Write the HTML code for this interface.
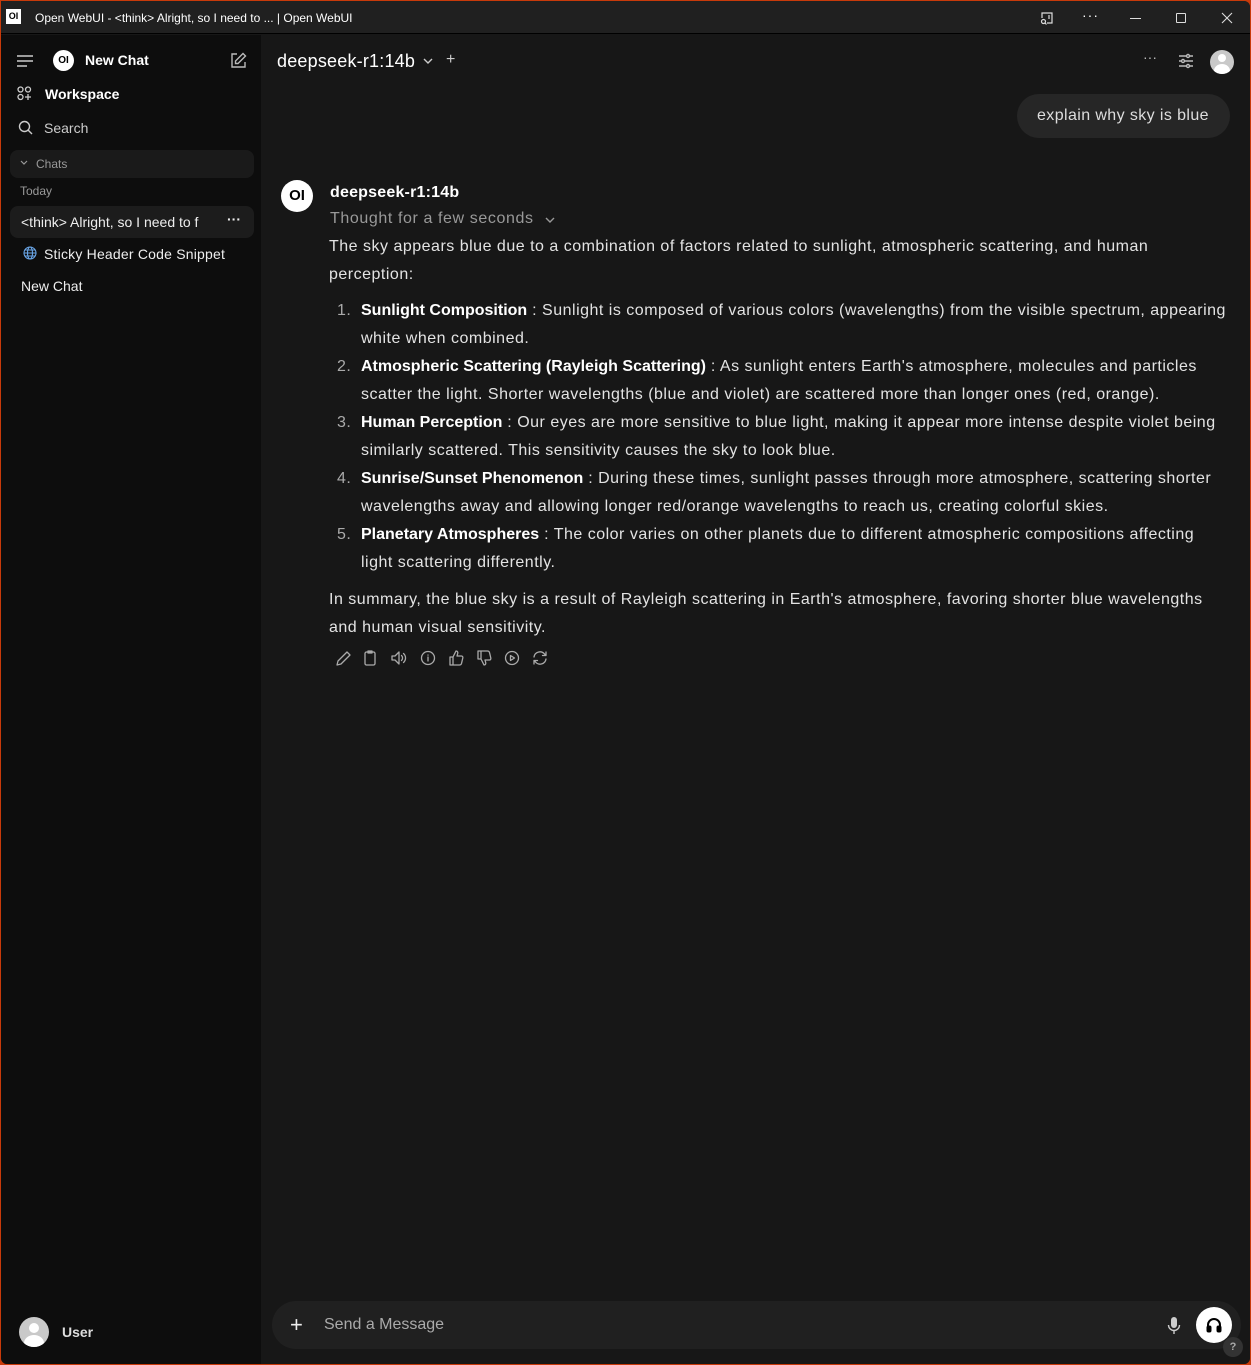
<!DOCTYPE html>
<html><head><meta charset="utf-8">
<style>
*{margin:0;padding:0;box-sizing:border-box}
html,body{width:1251px;height:1365px;overflow:hidden;background:#c83a0a;font-family:"Liberation Sans",sans-serif}
#win{position:absolute;left:1px;top:1px;width:1249px;height:1363px;background:#171717;border-radius:0 6px 6px 6px;overflow:hidden}
#title{position:absolute;left:0;top:0;width:100%;height:33px;background:#202020;border-bottom:1px solid #000;color:#fff;font-size:12px}
#side{position:absolute;left:0;top:34px;width:260px;height:1329px;background:#0d0d0d;color:#e8e8e8;font-size:14px}
.abs{position:absolute;white-space:nowrap}
#main{position:absolute;left:260px;top:34px;width:989px;height:1329px;background:#171717;color:#e3e3e3}
.t{font-size:16px;letter-spacing:0.5px;line-height:28px;color:#e3e3e3}
.t b{color:#fff;letter-spacing:0}
.num{color:#aaa}
svg{display:block}
</style></head><body>
<div id="win">
<div id="title">
 <div class="abs" style="left:5px;top:8px;width:15px;height:15px;background:#fff;color:#000;font-size:9px;font-weight:bold;text-align:center;line-height:15px">OI</div>
 <div class="abs" style="left:34px;top:10px">Open WebUI - &lt;think&gt; Alright, so I need to ... | Open WebUI</div>
 <svg class="abs" style="left:1038px;top:9px" width="16" height="16" viewBox="0 0 16 16" fill="none" stroke="#ddd" stroke-width="1.2"><path d="M3 8V3h10v10H8"/><circle cx="4.5" cy="11.5" r="2"/><path d="M6 13l1.5 1.5"/><path d="M10 5v4"/></svg>
 <div class="abs" style="left:1081px;top:6px;font-size:14px;letter-spacing:1px">···</div>
 <div class="abs" style="left:1129px;top:17px;width:11px;height:1px;background:#ddd"></div>
 <div class="abs" style="left:1175px;top:12px;width:10px;height:10px;border:1px solid #ddd;border-radius:1px"></div>
 <svg class="abs" style="left:1220px;top:11px" width="12" height="12" viewBox="0 0 12 12" stroke="#ddd" stroke-width="1.1"><path d="M1 1l10 10M11 1L1 11"/></svg>
</div>

<div id="side">
 <svg class="abs" style="left:16px;top:20px" width="16" height="12" viewBox="0 0 16 12" stroke="#ccc" stroke-width="1.5"><path d="M0 1h16M0 6h16M0 11h10"/></svg>
 <div class="abs" style="left:52px;top:15px;width:21px;height:21px;border-radius:50%;background:#fff;color:#000;font-size:10px;font-weight:bold;text-align:center;line-height:21px">OI</div>
 <div class="abs" style="left:84px;top:17px;font-weight:bold;color:#fff">New Chat</div>
 <svg class="abs" style="left:228px;top:17px" width="18" height="18" viewBox="0 0 18 18" fill="none" stroke="#bbb" stroke-width="1.4"><path d="M8 2H3v13h13v-5"/><path d="M14 1.5l2.5 2.5L9 11.5H6.5V9z"/></svg>
 <svg class="abs" style="left:16px;top:51px" width="15" height="15" viewBox="0 0 15 15" fill="none" stroke="#ccc" stroke-width="1.3"><circle cx="3.5" cy="3.5" r="2.5"/><circle cx="11" cy="3.5" r="2.5"/><circle cx="3.5" cy="11" r="2.5"/><path d="M11 8v6M8 11h6"/></svg>
 <div class="abs" style="left:44px;top:51px;font-weight:bold;color:#fff">Workspace</div>
 <svg class="abs" style="left:17px;top:85px" width="15" height="15" viewBox="0 0 15 15" fill="none" stroke="#ccc" stroke-width="1.4"><circle cx="6.5" cy="6.5" r="5"/><path d="M10 10l4 4"/></svg>
 <div class="abs" style="left:43px;top:85px;color:#ccc">Search</div>
 <div class="abs" style="left:9px;top:115px;width:244px;height:28px;background:#1a1a1a;border-radius:8px"></div>
 <svg class="abs" style="left:19px;top:125px" width="8" height="6" viewBox="0 0 8 6" fill="none" stroke="#999" stroke-width="1.2"><path d="M1 1l3 3 3-3"/></svg>
 <div class="abs" style="left:35px;top:122px;font-size:12px;color:#999">Chats</div>
 <div class="abs" style="left:19px;top:149px;font-size:12px;color:#999">Today</div>
 <div class="abs" style="left:9px;top:171px;width:244px;height:32px;background:#1c1c1c;border-radius:8px"></div>
 <div class="abs" style="left:20px;top:179px;color:#eee;width:195px;overflow:hidden">&lt;think&gt; Alright, so I need to f</div>
 <div class="abs" style="left:226px;top:176px;color:#eee;font-weight:bold">···</div>
 <svg class="abs" style="left:22px;top:211px" width="14" height="14" viewBox="0 0 14 14" fill="none" stroke="#6aa6e8" stroke-width="1.1"><circle cx="7" cy="7" r="6"/><ellipse cx="7" cy="7" rx="2.5" ry="6"/><path d="M1 7h12M2 4h10M2 10h10"/></svg>
 <div class="abs" style="left:43px;top:211px;color:#eee;letter-spacing:0.2px">Sticky Header Code Snippet</div>
 <div class="abs" style="left:20px;top:243px;color:#eee">New Chat</div>
 <div class="abs" style="left:18px;top:1282px;width:30px;height:30px;border-radius:50%;background:#c9c9c9;overflow:hidden">
  <div style="position:absolute;left:10px;top:6px;width:10px;height:10px;border-radius:50%;background:#fff"></div>
  <div style="position:absolute;left:5px;top:18px;width:20px;height:16px;border-radius:50%;background:#fff"></div>
 </div>
 <div class="abs" style="left:61px;top:1289px;font-weight:bold;color:#ddd">User</div>
</div>

<div id="main">
 <div class="abs" style="left:16px;top:16px;font-size:18px;color:#fff;letter-spacing:0.2px">deepseek-r1:14b</div>
 <svg class="abs" style="left:162px;top:23px" width="10" height="7" viewBox="0 0 10 7" fill="none" stroke="#ccc" stroke-width="1.4"><path d="M1 1l4 4 4-4"/></svg>
 <div class="abs" style="left:185px;top:16px;font-size:16px;color:#ccc">+</div>
 <div class="abs" style="left:882px;top:14px;color:#bbb;font-size:14px">···</div>
 <svg class="abs" style="left:917px;top:18px" width="16" height="16" viewBox="0 0 16 16" stroke="#bbb" stroke-width="1.4" fill="#171717"><path d="M1 3h14M1 8h14M1 13h14"/><circle cx="10" cy="3" r="1.5"/><circle cx="5" cy="8" r="1.5"/><circle cx="10" cy="13" r="1.5"/></svg>
 <div class="abs" style="left:949px;top:15px;width:24px;height:24px;border-radius:50%;background:#c9c9c9;overflow:hidden">
  <div style="position:absolute;left:8px;top:4px;width:8px;height:8px;border-radius:50%;background:#fff"></div>
  <div style="position:absolute;left:4px;top:14px;width:16px;height:14px;border-radius:50%;background:#fff"></div>
 </div>
 <div class="abs" style="left:756px;top:59px;width:213px;height:44px;border-radius:22px;background:#262626"></div>
 <div class="abs" style="left:776px;top:72px;font-size:16px;color:#ddd;letter-spacing:0.4px">explain why sky is blue</div>

 <div class="abs" style="left:20px;top:145px;width:32px;height:32px;border-radius:50%;background:#fff;color:#000;font-size:15px;font-weight:bold;text-align:center;line-height:32px">OI</div>
 <div class="abs" style="left:69px;top:149px;font-size:16px;font-weight:bold;color:#fff;letter-spacing:0.2px">deepseek-r1:14b</div>
 <div class="abs" style="left:69px;top:175px;font-size:16px;color:#999;letter-spacing:0.6px">Thought for a few seconds</div>
 <svg class="abs" style="left:284px;top:182px" width="10" height="7" viewBox="0 0 10 7" fill="none" stroke="#999" stroke-width="1.4"><path d="M1 1l4 4 4-4"/></svg>

 <div class="abs t" style="left:68px;top:198px">The sky appears blue due to a combination of factors related to sunlight, atmospheric scattering, and human<br>perception:</div>
 <div class="abs t num" style="left:76px;top:262px">1.</div>
 <div class="abs t" style="left:100px;top:262px"><b>Sunlight Composition</b> : Sunlight is composed of various colors (wavelengths) from the visible spectrum, appearing<br>white when combined.</div>
 <div class="abs t num" style="left:76px;top:318px">2.</div>
 <div class="abs t" style="left:100px;top:318px"><b>Atmospheric Scattering (Rayleigh Scattering)</b> : As sunlight enters Earth's atmosphere, molecules and particles<br>scatter the light. Shorter wavelengths (blue and violet) are scattered more than longer ones (red, orange).</div>
 <div class="abs t num" style="left:76px;top:374px">3.</div>
 <div class="abs t" style="left:100px;top:374px"><b>Human Perception</b> : Our eyes are more sensitive to blue light, making it appear more intense despite violet being<br>similarly scattered. This sensitivity causes the sky to look blue.</div>
 <div class="abs t num" style="left:76px;top:430px">4.</div>
 <div class="abs t" style="left:100px;top:430px"><b>Sunrise/Sunset Phenomenon</b> : During these times, sunlight passes through more atmosphere, scattering shorter<br>wavelengths away and allowing longer red/orange wavelengths to reach us, creating colorful skies.</div>
 <div class="abs t num" style="left:76px;top:486px">5.</div>
 <div class="abs t" style="left:100px;top:486px"><b>Planetary Atmospheres</b> : The color varies on other planets due to different atmospheric compositions affecting<br>light scattering differently.</div>
 <div class="abs t" style="left:68px;top:551px">In summary, the blue sky is a result of Rayleigh scattering in Earth's atmosphere, favoring shorter blue wavelengths<br>and human visual sensitivity.</div>

 <svg class="abs" style="left:74px;top:614px" width="216" height="18" viewBox="0 0 216 18" fill="none" stroke="#aaa" stroke-width="1.3" stroke-linecap="round" stroke-linejoin="round">
  <path d="M2 16l1-4L12 3l3 3-9 9z"/>
  <rect x="30" y="3" width="10" height="13" rx="1.5"/><path d="M33 2h4v2h-4z"/>
  <path d="M57 7h3l4-4v12l-4-4h-3z"/><path d="M66.5 6.5a3.5 3.5 0 010 5M68.5 4.5a6 6 0 010 9"/>
  <circle cx="93" cy="9" r="6.5"/><path d="M93 8v4M93 6v.1"/>
  <path d="M115 8h3v8h-3zM118 8l3-6c1.5 0 2 1 1.7 2.5L122 7h4.5c1 0 1.5 1 1.3 2l-1.3 5.5c-.3 1-1 1.5-2 1.5H118"/>
  <path d="M143 10h3V2h-3zM146 10l3 6c1.5 0 2-1 1.7-2.5L150 11h4.5c1 0 1.5-1 1.3-2l-1.3-5.5c-.3-1-1-1.5-2-1.5H146"/>
  <circle cx="177" cy="9" r="6.5"/><path d="M175.5 6.5v5l4-2.5z"/>
  <path d="M199 8a6 6 0 0110.5-3l1.5 1.5M211 3v3.5h-3.5M211 10a6 6 0 01-10.5 3L199 11.5M199 15v-3.5h3.5"/>
 </svg>

 <div class="abs" style="left:11px;top:1266px;width:969px;height:48px;border-radius:24px;background:#202020"></div>
 <div class="abs" style="left:29px;top:1277px;font-size:22px;color:#eee;font-weight:300">+</div>
 <div class="abs" style="left:63px;top:1281px;font-size:16px;color:#aaa">Send a Message</div>
 <svg class="abs" style="left:906px;top:1281px" width="14" height="20" viewBox="0 0 14 20" fill="#ccc" stroke="#ccc" stroke-width="1.4"><rect x="4" y="1" width="6" height="11" rx="3" stroke="none"/><path d="M1.5 9a5.5 5.5 0 0011 0M7 14.5V18" fill="none"/></svg>
 <div class="abs" style="left:935px;top:1272px;width:36px;height:36px;border-radius:50%;background:#fff"></div>
 <svg class="abs" style="left:944px;top:1281px" width="18" height="18" viewBox="0 0 18 18" fill="none" stroke="#000" stroke-width="2"><path d="M3 12V9a6 6 0 0112 0v3"/><rect x="2.5" y="10.5" width="3" height="5" rx="1" fill="#000"/><rect x="12.5" y="10.5" width="3" height="5" rx="1" fill="#000"/></svg>
 <div class="abs" style="left:962px;top:1302px;width:20px;height:20px;border-radius:50%;background:#333;color:#aaa;font-size:11px;font-weight:bold;text-align:center;line-height:20px">?</div>
</div>
</div>
</body></html>
